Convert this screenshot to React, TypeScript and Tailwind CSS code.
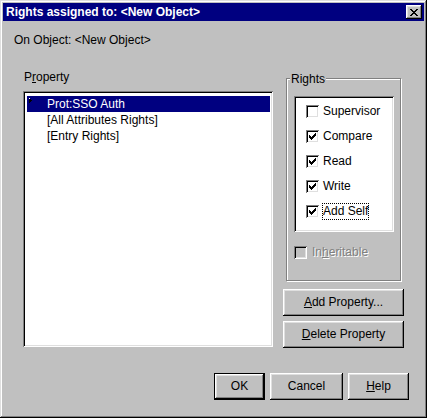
import React from 'react';

const raised =
  'shadow-[inset_-1px_-1px_0_#000,inset_1px_1px_0_#fff,inset_-2px_-2px_0_#808080,inset_2px_2px_0_#dfdfdf]';
const defaultRaised =
  'shadow-[inset_0_0_0_1px_#000,inset_-2px_-2px_0_#000,inset_2px_2px_0_#fff,inset_-3px_-3px_0_#808080,inset_3px_3px_0_#dfdfdf]';
const sunken =
  'shadow-[inset_1px_1px_0_#808080,inset_-1px_-1px_0_#fff,inset_2px_2px_0_#000,inset_-2px_-2px_0_#dfdfdf]';

const CheckMark = () => (
  <svg width="7" height="7" viewBox="0 0 7 7" shapeRendering="crispEdges" fill="#000">
    <rect x="6" y="0" width="1" height="1" />
    <rect x="5" y="1" width="2" height="1" />
    <rect x="0" y="2" width="1" height="1" />
    <rect x="4" y="2" width="3" height="1" />
    <rect x="0" y="3" width="2" height="1" />
    <rect x="3" y="3" width="3" height="1" />
    <rect x="0" y="4" width="5" height="1" />
    <rect x="1" y="5" width="3" height="1" />
    <rect x="2" y="6" width="1" height="1" />
  </svg>
);

function Checkbox({ checked, disabled }: { checked?: boolean; disabled?: boolean }) {
  return (
    <span
      className={`w-[13px] h-[13px] shrink-0 flex items-center justify-center ${
        disabled ? 'bg-[#c0c0c0]' : 'bg-white'
      } ${sunken}`}
    >
      {checked && <CheckMark />}
    </span>
  );
}

function Button({
  children,
  className = '',
  isDefault,
}: {
  children: React.ReactNode;
  className?: string;
  isDefault?: boolean;
}) {
  return (
    <button
      className={`h-[27px] bg-[#c0c0c0] flex items-center justify-center text-black ${
        isDefault ? defaultRaised : raised
      } ${className}`}
    >
      {children}
    </button>
  );
}

const rights = [
  { label: 'Supervisor', checked: false },
  { label: 'Compare', checked: true },
  { label: 'Read', checked: true },
  { label: 'Write', checked: true },
  { label: 'Add Self', checked: true, focused: true },
];

export default function App() {
  return (
    <div className="w-[427px] h-[418px] bg-[#c0c0c0] p-[3px] flex flex-col font-['Liberation_Sans',Arial,sans-serif] text-[12px] leading-[13px] text-black shadow-[inset_-1px_-1px_0_#000,inset_1px_1px_0_#dfdfdf,inset_-2px_-2px_0_#808080,inset_2px_2px_0_#fff]">
      {/* Title bar */}
      <div className="h-[18px] bg-[#000080] flex items-center pl-[3px] pr-[2px] shrink-0">
        <span className="font-bold text-white flex-1 whitespace-nowrap">
          Rights assigned to: &lt;New Object&gt;
        </span>
        <div className={`w-[16px] h-[14px] bg-[#c0c0c0] flex items-center justify-center ${raised}`}>
          <svg width="8" height="7" viewBox="0 0 8 7" shapeRendering="crispEdges" fill="#000">
            <rect x="0" y="0" width="2" height="1" />
            <rect x="6" y="0" width="2" height="1" />
            <rect x="1" y="1" width="2" height="1" />
            <rect x="5" y="1" width="2" height="1" />
            <rect x="2" y="2" width="4" height="1" />
            <rect x="3" y="3" width="2" height="1" />
            <rect x="2" y="4" width="4" height="1" />
            <rect x="1" y="5" width="2" height="1" />
            <rect x="5" y="5" width="2" height="1" />
            <rect x="0" y="6" width="2" height="1" />
            <rect x="6" y="6" width="2" height="1" />
          </svg>
        </div>
      </div>

      {/* Object line */}
      <div className="mt-[13px] ml-[11px] whitespace-nowrap">On Object: &lt;New Object&gt;</div>

      {/* Main row */}
      <div className="mt-[24px] ml-[20px] flex gap-[10px]">
        {/* Property list */}
        <div className="w-[250px] flex flex-col">
          <div className="ml-[1px]">
            P<u>r</u>operty
          </div>
          <div className={`mt-[7px] h-[256px] bg-white pt-[5px] pl-[4px] pr-[3px] ${sunken}`}>
            <div className="h-[16px] bg-[#000080] text-white flex items-center">
              <svg width="4" height="5" viewBox="0 0 4 5" className="ml-[2px] self-start mt-[2px]" shapeRendering="crispEdges">
                <rect x="0" y="0" width="1" height="5" fill="#000" />
                <rect x="1" y="1" width="1" height="3" fill="#000" />
                <rect x="2" y="2" width="1" height="1" fill="#000" />
                <rect x="0" y="0" width="1" height="1" fill="#fff" />
              </svg>
              <span className="ml-[14px] whitespace-nowrap">Prot:SSO Auth</span>
            </div>
            <div className="h-[16px] flex items-center pl-[20px] whitespace-nowrap">[All Attributes Rights]</div>
            <div className="h-[16px] flex items-center pl-[20px] whitespace-nowrap">[Entry Rights]</div>
          </div>
        </div>

        {/* Right column */}
        <div className="w-[121px] flex flex-col">
          <div className="relative mx-[3px] mt-[7px] h-[203px] border border-[#808080] shadow-[inset_1px_1px_0_#fff,1px_1px_0_#fff] pl-[7px] pt-[17px]">
            <span className="absolute left-[3px] top-[-6px] px-[1px] bg-[#c0c0c0]">Rights</span>
            <div className={`w-[100px] h-[136px] bg-white pt-[9px] pl-[12px] flex flex-col gap-[12px] ${sunken}`}>
              {rights.map((r) => (
                <div key={r.label} className="h-[13px] flex items-center">
                  <Checkbox checked={r.checked} />
                  <span
                    className={`ml-[3px] py-[1px] border whitespace-nowrap ${
                      r.focused ? 'border-dotted border-black' : 'border-transparent'
                    }`}
                  >
                    {r.label}
                  </span>
                </div>
              ))}
            </div>
            <div className="mt-[14px] h-[13px] flex items-center">
              <Checkbox disabled />
              <span className="ml-[5px] text-[#808080] [text-shadow:1px_1px_0_#fff] whitespace-nowrap">
                In<u>h</u>eritable
              </span>
            </div>
          </div>
          <div className="mt-[8px] flex flex-col gap-[5px]">
            <Button className="w-[121px]">
              <u>A</u>dd Property...
            </Button>
            <Button className="w-[121px]">
              <u>D</u>elete Property
            </Button>
          </div>
        </div>
      </div>

      {/* Bottom buttons */}
      <div className="mt-[25px] flex justify-end gap-[5px] pr-[15px]">
        <Button isDefault className="w-[51px]">
          OK
        </Button>
        <Button className="w-[73px]">Cancel</Button>
        <Button className="w-[61px]">
          <u>H</u>elp
        </Button>
      </div>
    </div>
  );
}
